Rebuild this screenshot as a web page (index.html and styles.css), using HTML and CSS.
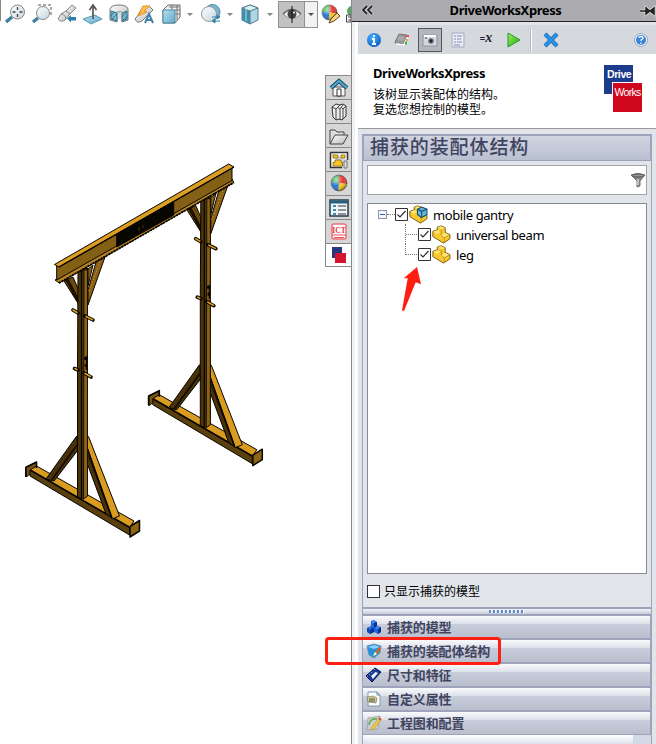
FILE: index.html
```html
<!DOCTYPE html>
<html lang="zh-CN">
<head>
<meta charset="utf-8">
<title>DriveWorksXpress</title>
<link rel="stylesheet" href="styles.css">
</head>
<body>
<svg class="defs" aria-hidden="true">
  <defs>
    <linearGradient id="glass" x1="0" y1="0" x2="1" y2="1"><stop offset="0" stop-color="#fff"/><stop offset="1" stop-color="#c3d6df"/></linearGradient>
    <linearGradient id="steel" x1="0" y1="0" x2="1" y2="1"><stop offset="0" stop-color="#fff"/><stop offset="1" stop-color="#b5b8ba"/></linearGradient>
    <linearGradient id="cyan" x1="0" y1="0" x2="1" y2="1"><stop offset="0" stop-color="#b5e0f1"/><stop offset="1" stop-color="#64a9c8"/></linearGradient>
    <radialGradient id="shine" cx=".35" cy=".3" r=".7"><stop offset="0" stop-color="#fff" stop-opacity=".65"/><stop offset=".6" stop-color="#fff" stop-opacity="0"/><stop offset="1" stop-opacity=".4"/></radialGradient>
    <radialGradient id="blue" cx=".4" cy=".3" r=".8"><stop offset="0" stop-color="#45b2ff"/><stop offset="1" stop-color="#0755bd"/></radialGradient>
    <linearGradient id="play" x1="0" y1="0" x2="1" y2="1"><stop offset="0" stop-color="#a3ef68"/><stop offset="1" stop-color="#18a80c"/></linearGradient>
    <symbol id="ball" viewBox="0 0 18 18">
      <path d="M9 9L9 1A8 8 0 0 0 1.2 8Z" fill="#24ae3b"/><path d="M9 9L9 1A8 8 0 0 1 17 10Z" fill="#e73535"/>
      <path d="M9 9L17 10A8 8 0 0 1 8 17Z" fill="#f4c827"/><path d="M9 9L8 17A8 8 0 0 1 1.2 8Z" fill="#2775d5"/>
      <circle cx="9" cy="9" r="8" fill="url(#shine)" stroke="#555" stroke-width=".6"/>
    </symbol>
    <symbol id="part" viewBox="0 0 18 18">
      <path d="M.8 6L5 4.500V2L8.500.8L12.500 2.500V7L17 9V13L11 17.200L.8 11Z" fill="#f9c82c" stroke="#7d5a14" stroke-width=".9" stroke-linejoin="round"/>
      <path d="M1.500 6.200L5 5L8 6.700L4.500 8.500Z M5.500 2.200L8.500 1.300L12 2.700L8.800 4.200Z M8.500 9.500L12 7.500L16.500 9.200L11.500 12Z" fill="#ffe678"/>
      <path d="M8.800 4.200V9.500L11.500 12.200V17M11.500 12.200L17 9.200" fill="none" stroke="#b88a25" stroke-width=".8"/>
    </symbol>
    <g id="frame-leg" stroke="#080500" stroke-width="1" stroke-linejoin="round">
      <path d="M64 281L73 277L83 300L81 308Z" fill="#6b480c"/><path d="M66 280L80 306L83 308L68 279Z" fill="#2a1b02"/>
      <path d="M88 269L93 265L88 286ZM96 262L105 257L88 305V290Z" fill="#8a6114"/><path d="M100 262L89 291" stroke="#dba43a" stroke-dasharray="1 2"/>
      <path d="M25.5 467.5L36.5 462V468L27 476.5H25.5Z" fill="#765310"/>
      <path d="M30 470L36.5 466L134 521L129.5 528Z" fill="#d99b20"/>
      <path d="M30 470L129.5 527.5V535L30 476Z" fill="#59400c"/>
      <path d="M31 470.500L129 527" stroke-width="1.600"/>
      <path d="M26 467.500V476.500M25.500 467.500L36.500 462V468" fill="none" stroke-width="1.600"/>
      <path d="M76.7 436L78 450L54 481L46 479Z" fill="#4a3208"/><path d="M77 445L51 481" stroke="#171002" stroke-width="2"/>
      <path d="M82.5 440L84 455L106 514L112 518Z" fill="#4b3208"/><path d="M84 438L88.5 436.5L119.5 516L112 519Z" fill="#d99b20"/>
      <path d="M84 440L112 518" stroke-width="1.600"/>
      <path d="M78 270L87.5 268V496L83 499L77.5 497V370Z" fill="#4c3309"/>
      <path d="M84 270H87.5V496L83.5 499Z" fill="#8c6315" stroke-width=".8"/>
      <path d="M81.5 270V498M86.5 356V370" stroke-width="1.2"/>
      <path d="M85.5 357V360M86 364V367M86 372V375" stroke-width="2.5"/>
      <g stroke-linecap="round"><path d="M73 310L78 313M85 316L93 320M74.5 368.5L78 370M84 373L91 377" stroke-width="3.6"/><path d="M73 310L77 312.5M86 316.5L92.5 319.7M75 368.5L77 369.7M85 373.5L90.5 376.5" stroke="#d99b20" stroke-width="1.600"/></g>
      <path d="M130 526.5L139.5 520.5V531L130 537Z" fill="#8b6415" stroke-width="1.500"/>
    </g>
  </defs>
</svg>
<div class="app">
  <main class="viewport">
    <div class="toolbar">
      <svg viewBox="0 0 22 24"><circle cx="13.500" cy="10" r="7" fill="url(#glass)" stroke="#888"/><path d="M13.500 5V8M13.500 12V15M8.500 10H11.500M15.500 10H18.500" stroke="#444" stroke-width="1.300"/><path d="M8 15L2 20" stroke="#407da3" stroke-width="3.500"/></svg>
      <svg viewBox="0 0 22 24"><path d="M7 3H20V15" fill="none" stroke="#555" stroke-dasharray="3 2"/><circle cx="12" cy="11" r="6.500" fill="url(#glass)" stroke="#888"/><path d="M7 16L2 20" stroke="#407da3" stroke-width="3.500"/></svg>
      <svg viewBox="0 0 22 24"><path d="M2 17L5 12L10 9L16 3L20 6L13 13L9 18Q5 21 2 17Z" fill="url(#steel)" stroke="#888"/><path d="M5 12Q9 12 10 17M10 9L14 12" fill="none" stroke="#888"/><path d="M11 16.500L15 13V15H20V18.500H15V20.500Z" fill="#2e7faa"/></svg>
      <svg viewBox="0 0 22 24"><path d="M1 17L13 13L20 17L9 22Z" fill="url(#cyan)" stroke="#5798b2"/><path d="M11 17V5M7.500 8L11 3L14.500 8" fill="none" stroke="#555" stroke-width="1.700"/></svg>
      <svg viewBox="0 0 22 24"><path d="M2 7Q3 3 11 3Q19 3 20 7V18L14 20V10H9V20L2 18Z" fill="url(#steel)" stroke="#777"/><path d="M9 10Q11 12 14 10V17H9Z" fill="#ddd"/><path d="M3 9L9 11V19L3 17ZM14 11L19 9V17L14 19Z" fill="#79b9d2" stroke="#33738d"/><path d="M3 14L6 10M4 17L9 12M14 15L18 10M15 18L19 14" stroke="#226782" stroke-width=".8"/></svg>
      <svg viewBox="0 0 22 24"><path d="M2 17L6 12L16 4L20 8L9 19Q4 22 2 17Z" fill="url(#steel)" stroke="#777"/><path d="M5 13L10 4H17L11 9L14 10L5 14L8 9Z" fill="#ffc14c" stroke="#e6902b"/><path d="M12 21L16 12L20 21M14 18H18" fill="none" stroke="#3f81a6" stroke-width="2"/></svg>
      <svg viewBox="0 0 22 24"><path d="M3 8L8 3H20V15L15 21H3Z" fill="#eee" stroke="#666"/><path d="M15 8H20M12 3V8M17 3V18M9 5H19M15 12H20" stroke="#777"/><path d="M3 8H15V21H3Z" fill="url(#cyan)" stroke="#4c8ba5"/></svg>
      <i class="caret"></i>
      <svg viewBox="0 0 22 24"><circle cx="12.500" cy="10" r="7.500" fill="#70b7d2" stroke="#558aa3"/><circle cx="9" cy="12" r="7.500" fill="url(#glass)" stroke="#999"/><path d="M12 15H18M17 13L20 15L17 17ZM20 19H14M15 17L12 19L15 21Z" fill="#3281aa" stroke="#3281aa"/></svg>
      <i class="caret"></i>
      <svg viewBox="0 0 22 24"><path d="M3 6L11 3L19 6V18L11 22L3 18Z" fill="#afd5e4" stroke="#567e90"/><path d="M3 6L11 9V22L3 18Z" fill="#408eae"/><path d="M3 6L11 3L19 6L11 9ZM11 9V22" fill="#dff2f8" stroke="#557b8a"/><path d="M7 5V19" stroke="#b7dce8"/></svg>
      <i class="caret"></i>
      <div class="pressed"><svg viewBox="0 0 22 24"><path d="M2 12Q11 3 20 12Q11 21 2 12Z" fill="#eee" stroke="#888"/><path d="M2 12Q11 3 20 12" fill="none" stroke="#666" stroke-width="1.500"/><circle cx="11" cy="12" r="4.500" fill="#444"/><path d="M11 4V21" stroke="#111"/><circle cx="13" cy="10.500" r="1" fill="#fff"/></svg></div>
      <div class="drop"><i class="caret"></i></div>
      <svg viewBox="0 0 22 24"><use href="#ball" x="1" y="2" width="17" height="17"/><path d="M9 21L11 17L17 11L20 14L14 19Z" fill="#ffd47d" stroke="#604020"/></svg>
      <svg class="cut" viewBox="0 0 8 24"><circle cx="9" cy="9" r="5" fill="#57a768"/><path d="M3.500 13H8V20H3.500Z" fill="#fff" stroke="#444"/><path d="M5 15H8M5 18H8" stroke="#444"/></svg>
    </div>
    <div class="workspace">
      <svg class="model" viewBox="0 28 325 716">
        <use href="#frame-leg" transform="translate(122.800 -71.300)"/>
        <use href="#frame-leg"/>
        <g stroke="#080500" stroke-linejoin="round">
          <path d="M55 280L59.300 283L233.700 182.500L232 179Z" fill="#b8841f"/>
          <path d="M56.700 266L232 168V180.500L56.700 280Z" fill="#846014"/>
          <path d="M116.700 233L173.700 201V215L116.700 247Z" fill="#080601"/>
          <path d="M54.500 264.500L228.700 164L234 167L59 267Z" fill="#db9d22"/>
          <path d="M59 267L234 167" stroke-width="1.300"/>
          <path d="M59 283L234 182.500" stroke-width="1.800" stroke-dasharray="2 1"/>
        </g>
        <path d="M139 227V231M143 225V228" stroke="#5e4510" stroke-width=".8"/>
      </svg>
      <nav class="tabs">
        <div><svg viewBox="0 0 20 20"><path d="M4 9H16V18H4Z" fill="#f7f7f7" stroke="#555"/><path d="M8 11H12V18H8Z" fill="#fff" stroke="#333"/><path d="M2 10L10 3L18 10" fill="none" stroke="#164c6a" stroke-width="4"/><path d="M2 10L10 3L18 10" fill="none" stroke="#54aaca" stroke-width="2"/></svg></div>
        <div><svg viewBox="0 0 20 20"><path d="M3 5L7 2L11 3L14 2L17 4V14L13 18L10 17L7 18L4 15Z" fill="#eee" stroke="#333"/><path d="M3 5L7 7V18M7 7L11 3M8 5L11 7V17M11 7L14 3M12 5L14 7V17M14 7L17 4" fill="none" stroke="#444"/></svg></div>
        <div><svg viewBox="0 0 20 20"><path d="M1 18V4H6L8 6H15V10" fill="#ddd" stroke="#444"/><path d="M1 18L6 9H19L14 18Z" fill="url(#steel)" stroke="#444"/></svg></div>
        <div><svg viewBox="0 0 20 20"><path d="M1.500 2.500H18.500V10M13 17.500H1.500V2.500" fill="#fff" stroke="#333" stroke-width="1.500"/><path d="M4 5H9V8H4ZM12 5H16V8H12ZM6 10H12V12.500H13.500V16H4V12.500H6Z" fill="#ffca28" stroke="#6b5209" stroke-width=".7"/><path d="M15 11H18V18H15Z" fill="#ddd" stroke="#777"/></svg></div>
        <div><svg viewBox="0 0 20 20"><use href="#ball" x="1" y="0" width="18" height="18"/></svg></div>
        <div><svg viewBox="0 0 20 20"><path d="M1 2H19V18H1Z" fill="#eef5f8" stroke="#263d4c" stroke-width="1.500"/><path d="M1 4H19" stroke="#275e7c" stroke-width="3"/><path d="M4 8H7M4 12H7M4 16H7" stroke="#3d8baa" stroke-width="2"/><path d="M9 8H17M9 12H17M9 16H17" stroke="#333"/></svg></div>
        <div><svg viewBox="0 0 20 20"><rect x="3" y="2" width="14" height="15" rx="2" fill="#fff" stroke="#ee7078" stroke-width="1.500"/><text x="10" y="11" class="ict">ICT</text><path d="M3 13H17M5 15.500H15" stroke="#ed515c"/></svg></div>
        <div class="active"><svg viewBox="0 0 20 20"><path d="M3 2H13V13H3Z" fill="#27397c"/><path d="M6 8H17V18H6Z" fill="#d31532"/></svg></div>
      </nav>
    </div>
  </main>
  <aside class="panel">
    <header class="titlebar">
      <svg class="collapse" viewBox="0 0 12 12"><path d="M6 1L2 5L6 9M11 1L7 5L11 9" fill="none" stroke="#ddd" stroke-width="3"/><path d="M6 1L2 5L6 9M11 1L7 5L11 9" fill="none" stroke="#222" stroke-width="1.800"/></svg>
      <h1>DriveWorksXpress</h1>
      <svg class="pin" viewBox="0 0 18 12"><path d="M2 6H8M8 2V10M8 3L12 6L16 3V9L12 6L8 9Z" fill="#222" stroke="#ddd" stroke-width="3"/><path d="M2 6H8M8 2V10M8 3L12 6L16 3V9L12 6L8 9Z" fill="#222" stroke="#222" stroke-width="1.500"/></svg>
    </header>
    <div class="panel-inner">
      <div class="actions">
        <div><svg viewBox="0 0 18 18"><circle cx="9" cy="9" r="7" fill="url(#blue)"/><path d="M9 4V6M7 8H9V13M7 13H11" fill="none" stroke="#fff" stroke-width="1.800"/></svg></div>
        <div><svg viewBox="0 0 18 18"><path d="M2 11L6 3L14 4L11 14L3 13Z" fill="#959595" stroke="#777"/><path d="M6 5L12 6L10 10L4 9Z" fill="#aaa"/><path d="M3 13L11 14L15 5" fill="none" stroke="#fff" stroke-width="1.500"/><path d="M13 5H16" stroke="#e45443" stroke-width="2"/><path d="M13 9H15" stroke="#f2a13b" stroke-width="2"/><path d="M12 12H14" stroke="#35b949" stroke-width="3"/></svg></div>
        <div class="on"><svg viewBox="0 0 18 18"><path d="M2 4H16V15H2Z" fill="#d3d7e0" stroke="#8c93a2"/><path d="M3 5H15" stroke="#fff" stroke-width="2"/><circle cx="10" cy="10" r="3.500" fill="#666d7b" stroke="#eee"/><circle cx="10" cy="10" r="1.400" fill="#222"/><path d="M4 7H6" stroke="#444"/></svg></div>
        <div><svg viewBox="0 0 18 18"><path d="M3 2H15V16H3Z" fill="#e7ebf4" stroke="#a0aac3"/><path d="M5 5H7M8 5H13M5 8H7M8 8H12M5 11H7M8 11H13M5 14H11" stroke="#7e8cb0"/></svg></div>
        <div class="formula">=<i>x</i></div>
        <div><svg viewBox="0 0 18 18"><path d="M3 2L15 9L3 16Z" fill="url(#play)" stroke="#239d18"/></svg></div>
        <hr>
        <div><svg viewBox="0 0 18 18"><path d="M3 3L15 15M15 3L3 15" stroke="#1260ac" stroke-width="4"/><path d="M3 3L15 15M15 3L3 15" stroke="#2d91ee" stroke-width="2.800"/></svg></div>
        <div class="help"><svg viewBox="0 0 18 18"><circle cx="9" cy="9" r="6.500" fill="#eef5ff" stroke="#9ba7b6"/><circle cx="9" cy="9" r="5" fill="#3984d6"/><path d="M7 7Q7 5.500 9 5.500Q11 5.500 11 7Q11 8 9 9V10M9 11.500V13" fill="none" stroke="#fff" stroke-width="1.300"/></svg></div>
      </div>
      <section class="intro">
        <div><h2>DriveWorksXpress</h2><p>该树显示装配体的结构。</p><p>复选您想控制的模型。</p></div>
        <div class="logo"><span>Drive</span><span>Works</span></div>
      </section>
      <section class="capture">
        <h3>捕获的装配体结构</h3>
        <div class="filter"><svg viewBox="0 0 16 16"><path d="M1 3Q8 0 15 3L10 9V14L7 15V9Z" fill="#888" stroke="#777"/><ellipse cx="8" cy="3.500" rx="6" ry="1.500" fill="#999" stroke="#555"/><path d="M8 7V13" stroke="#ddd" stroke-width="1.300"/></svg></div>
        <div class="tree">
          <div class="row root"><b class="minus"></b><i class="link"></i><svg class="check" viewBox="0 0 13 13"><path d="M.5.5H12.500V12.500H.5Z" fill="#fff" stroke="#333"/><path d="M2.500 6.500L5 9L10.500 3" fill="none" stroke="#333" stroke-width="1.200"/></svg><svg class="part" viewBox="0 0 18 18"><use href="#part"/><path d="M8 4L12 2L17 4V9L12 12L8 9Z" fill="#67b5df" stroke="#174d6e"/><path d="M8 4L12 6L17 4M12 6V12" fill="none" stroke="#174d6e"/></svg><span>mobile gantry</span></div>
          <div class="row child"><i class="link"></i><svg class="check" viewBox="0 0 13 13"><path d="M.5.5H12.500V12.500H.5Z" fill="#fff" stroke="#333"/><path d="M2.500 6.500L5 9L10.500 3" fill="none" stroke="#333" stroke-width="1.200"/></svg><svg class="part" viewBox="0 0 18 18"><use href="#part"/></svg><span>universal beam</span></div>
          <div class="row child last"><i class="link"></i><svg class="check" viewBox="0 0 13 13"><path d="M.5.5H12.500V12.500H.5Z" fill="#fff" stroke="#333"/><path d="M2.500 6.500L5 9L10.500 3" fill="none" stroke="#333" stroke-width="1.200"/></svg><svg class="part" viewBox="0 0 18 18"><use href="#part"/></svg><span>leg</span></div>
        </div>
        <label class="only"><span class="box"></span>只显示捕获的模型</label>
        <div class="splitter"><i></i></div>
        <nav class="stack">
          <div><svg viewBox="0 0 16 16"><path d="M5 2L8 1L11 3V7L8 9L5 7Z" fill="#1c65e4"/><path d="M1 9L5 7L8 9V13L4 15L1 13Z" fill="#0f49bb"/><path d="M8 9L11 7L15 8V13L12 15L8 13Z" fill="#1b67dc"/><path d="M8 4L11 3V7L8 9ZM5 11L8 9V13L4 15ZM12 10L15 8V13L12 15Z" fill="#0a2f91"/><path d="M6 3H9M3 9H5M10 9H13" stroke="#69adf5"/></svg>捕获的模型</div>
          <div><svg viewBox="0 0 16 16"><path d="M1 3L8 1L15 3L14 10L8 15L3 12Z" fill="#2491da" stroke="#5f8fb2" stroke-width=".8"/><path d="M2 4L8 2L14 4L8 6Z" fill="#8bd2ff"/><path d="M7 14L8 10L13 4L14 9Z" fill="#48b84b"/><path d="M9 10L13 4L15 5L11 11Z" fill="#ee5139"/><path d="M7 13L9 9L11 11Z" fill="#fff"/></svg>捕获的装配体结构</div>
          <div><svg viewBox="0 0 16 16"><path d="M0 9L9 1L15 5L6 15Z" fill="#183a96" stroke="#071447"/><path d="M5 9L9.500 5L12 6L7 12Z" fill="#eef2ff"/><path d="M1 9L2 10M3 7L4 8M5 5L6 6M8 2L9 3" stroke="#8ba9f2"/></svg>尺寸和特征</div>
          <div><svg viewBox="0 0 16 16"><path d="M2 1H11L14 4V15H2Z" fill="#fff" stroke="#7b99ad"/><path d="M11 1V4H14" fill="none" stroke="#528ab0"/><path d="M1 6L7 5L11 7L10 12L2 11Z" fill="#d5cb89" stroke="#797b61" stroke-width=".7"/><path d="M3 8H9M3 10H9" stroke="#555"/></svg>自定义属性</div>
          <div><svg viewBox="0 0 16 16"><path d="M2 3L14 1L12 14L1 15Z" fill="#cbd0cd" stroke="#929b94" stroke-width=".7"/><path d="M3 10Q4 3 11 4" fill="none" stroke="#62a957" stroke-width="1.500"/><path d="M6 12L13 3L15 5L8 14L5 15Z" fill="#f6c643" stroke="#b59448" stroke-width=".6"/><path d="M13 3L15 5" stroke="#d94632" stroke-width="2"/></svg>工程图和配置</div>
        </nav>
        <div class="overflow"><i></i></div>
      </section>
    </div>
  </aside>
</div>
<svg class="pointer" viewBox="0 0 22 46"><path d="M16 1L20 18.300L14.700 16.300L3 45L1 44.500L6.700 12.300H2.700Z" fill="#ff1f12"/></svg>
<div class="highlight"></div>
</body>
</html>
```
FILE: styles.css
```css
* { box-sizing: border-box; }
body { margin: 0; width: 656px; height: 744px; overflow: hidden; position: relative; background: #fff; color: #000; font-family: "Noto Sans", "Noto Sans CJK SC", sans-serif; }
.defs { position: absolute; width: 0; height: 0; }
svg { display: block; flex: none; }
h1, h2, h3, p { margin: 0; }
.app { display: flex; height: 744px; }

.viewport { width: 351px; display: flex; flex-direction: column; }
.toolbar { height: 28px; display: grid; grid-template-columns: 30px 23px 27px 26px 25px 26px 27px 12px 30px 8px 32px 8px 4px 27px 13px 25px 8px; align-items: center; justify-items: center; background: linear-gradient(#888, #888) 0 0 / 1px 21px no-repeat; }
.toolbar > svg, .pressed svg { width: 22px; height: 24px; }
.toolbar .cut { width: 8px; }
.caret { border: 3px solid transparent; border-top-color: #888; border-bottom: 0; width: 0; height: 0; }
.pressed, .drop { width: 100%; height: 27px; border: 1px solid #909090; display: flex; align-items: center; justify-content: center; }
.pressed { background: #c2c2c4; grid-column: 14; }
.drop { background: #f2f2f2; border-left: 0; }
.drop .caret { border-top-color: #555; }
.workspace { flex: 1; display: flex; }
.model { width: 325px; height: 716px; }
.tabs { width: 26px; margin-top: 47px; }
.tabs div { height: 24px; border: 1px solid #888; border-width: 1px 0 0 1px; background: #d6d6d6; display: grid; place-items: center; }
.tabs svg { width: 20px; height: 20px; }
.tabs .active { background: #fff; border-bottom-width: 1px; }
.ict { font: bold 7.500px "Liberation Serif", serif; fill: #e83443; text-anchor: middle; }

.panel { width: 305px; border-left: 1px solid #888; background: #f1f2f3; display: flex; flex-direction: column; }
.titlebar { height: 22px; background: #acacb0; border-bottom: 1px solid #222; display: flex; align-items: center; }
.titlebar h1 { flex: 1; text-align: center; font-size: 13px; line-height: 20px; height: 22px; letter-spacing: -.420px; }
.collapse { width: 12px; height: 12px; margin-left: 9px; }
.pin { width: 18px; height: 12px; }
.panel-inner { flex: 1; margin-left: 3px; padding-top: 3px; border-left: 3px solid #fdfdfd; background: #e1e5ea; display: flex; flex-direction: column; }
.actions { height: 29px; background: #d5d9de; display: flex; align-items: center; padding-left: 4px; }
.actions > div { width: 24px; height: 24px; margin-right: 4px; display: grid; place-items: center; }
.actions svg { width: 18px; height: 18px; }
.actions .on { background: #b4b6bd; border: 1px solid #555; }
.actions hr { width: 2px; height: 22px; margin: 0 7px 0 0; border: 0; border-left: 1px solid #b5b8bd; background: #fff; }
.actions .help { margin-left: auto; margin-right: 3px; }
.actions .formula { display: block; font: bold 9px/22px "Liberation Sans", sans-serif; text-align: center; color: #223; }
.formula i { font: italic bold 14px/20px "Liberation Serif", serif; }
.intro { height: 75px; background: #fff; border-bottom: 1px solid #999; padding: 10px 14px 0 15px; display: flex; justify-content: space-between; }
.intro h2 { font-size: 13px; line-height: 18px; margin-bottom: 6px; letter-spacing: -.400px; }
.intro p { font: 12px/15px "Liberation Sans", "Noto Sans CJK SC", sans-serif; height: 15px; }
.logo { width: 39px; height: 47px; margin-top: 1px; display: grid; grid-template: 17px 29px / 8px 30px; font: 10.500px "Liberation Sans Narrow", "Liberation Sans", sans-serif; color: #fff; letter-spacing: -.4px; margin-right: -1px; }
.logo span:first-child { grid-area: 1 / 1 / 3 / 3; width: 29px; height: 29px; background: #1d3b8b; padding: 3px 0 0 3px; font-weight: bold; }
.logo span:last-child { grid-area: 2 / 2; background: #cf0820; border: solid #fff; border-width: 1px 0 0 1px; width: 30px; height: 30px; line-height: 18px; text-align: center; letter-spacing: -.7px; }

.capture { width: 290px; margin: 5px 0 0 4px; flex: 1; border: solid #9ea3bc; border-width: 0 1px; display: flex; flex-direction: column; }
.capture h3 { height: 27px; border: 1px solid #9ea3bc; border-top-width: 2px; background: linear-gradient(#cfd4e0, #b9c0d0); padding-left: 6px; font: 500 19px/20px "Noto Sans CJK SC", sans-serif; letter-spacing: .900px; color: #41445f; }
.filter { height: 30px; margin: 4px 4px 0; border: 1px solid #a2a3a9; background: #fff; display: flex; align-items: center; justify-content: flex-end; }
.filter svg { width: 16px; height: 16px; }
.tree { height: 371px; margin: 8px 4px 0; border: 1px solid #878991; background: #fff; font-size: 13px; }
.row { height: 20px; display: flex; align-items: center; }
.root { padding-left: 10px; }
.minus { width: 9px; height: 9px; border: 1px solid #8795ad; background: linear-gradient(#325eb5, #325eb5) center / 5px 1px no-repeat #f3f5f8; }
.root .link { width: 8px; border-top: 1px dotted #777; }
.check { width: 13px; height: 13px; }
.part { width: 19px; height: 19px; margin-left: 1px; }
.row span { margin-left: 5px; line-height: 18px; padding-top: 1px; white-space: nowrap; letter-spacing: -.400px; }
.child { margin-left: 37px; }
.child .link { width: 13px; height: 20px; border-left: 1px dotted #777; background: repeating-linear-gradient(90deg, #777 0 1px, transparent 1px 2px) 0 10px / 100% 1px no-repeat; }
.child.last .link { height: 11px; margin-bottom: 9px; background-position: 0 100%; }
.only { display: flex; align-items: center; gap: 4px; height: 14px; margin: 10px 0 0 4px; font: 12px/14px "Noto Sans CJK SC", sans-serif; }
.box { width: 13px; height: 13px; border: 1px solid #333; background: #fff; }
.splitter { height: 7px; margin-top: 9px; border-top: 2px solid #9ea3bc; background: linear-gradient(#f2f4f7, #c5cbda); display: flex; justify-content: center; }
.splitter i { width: 36px; height: 3px; margin-top: 1px; background: repeating-linear-gradient(90deg, #5a8bcf 0 2px, #fff 2px 3px, transparent 3px 4px); }
.stack { background: #9ea3bc; padding: 2px 1px 1px 0; display: flex; flex-direction: column; gap: 2px; }
.stack div { height: 22px; display: flex; align-items: center; gap: 5px; padding-left: 3px; background: linear-gradient(#fafbfd 0, #dce0e9 8px, #c8cddc 8px, #b9bfcd 100%); font: bold 13px/20px "Noto Sans CJK SC", sans-serif; letter-spacing: -.100px; color: #41445f; }
.stack svg { width: 16px; height: 16px; }
.overflow { flex: 1; background: linear-gradient(#fff, #dce0e9); display: flex; justify-content: flex-end; }
.overflow i { width: 18px; background: #d3dae6; }

.pointer { position: absolute; left: 401px; top: 266px; width: 22px; height: 46px; }
.highlight { position: absolute; left: 325px; top: 637px; width: 176px; height: 28px; border: 3px solid #ff1f12; border-radius: 4px; }
```
